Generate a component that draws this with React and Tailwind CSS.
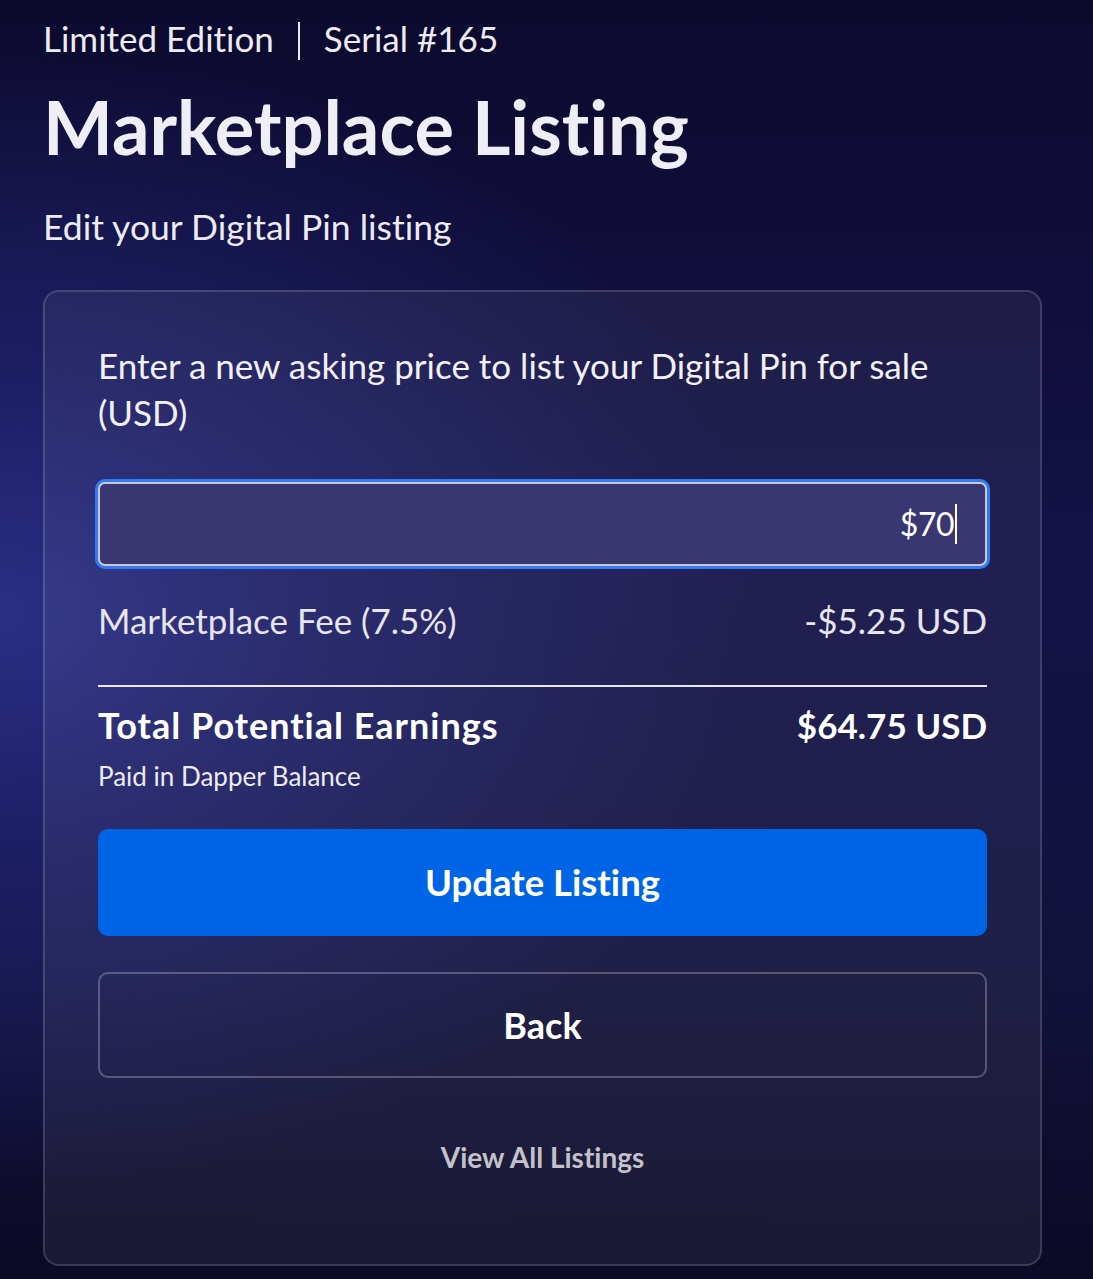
import React from 'react'

const FEE_RATE = 0.075;
const price = 70;

export default function App() {
  const fee = (price * FEE_RATE).toFixed(2);
  const total = (price - price * FEE_RATE).toFixed(2);

  return (
    <div className="min-h-[1279px] w-full bg-[#0c0a2c] bg-[radial-gradient(ellipse_70%_45%_at_0%_48%,#2a2f86_0%,#1d1f64_40%,transparent_100%),linear-gradient(180deg,#0d0a2e_0%,#141248_45%,#13123c_75%,#0c0a26_100%)] pl-[43px] pr-[51px] pt-[14px] pb-[13px] font-['Lato',sans-serif] text-white [font-variant-ligatures:none]">
      <div className="flex items-center text-[35px] leading-[48px] text-[#ecebf2]">
        <span>Limited Edition</span>
        <span className="mx-[24px] h-[38px] w-[2px] translate-y-[3px] bg-[#ecebf2]" />
        <span>Serial #165</span>
      </div>

      <h1 className="mt-[22px] text-[74px] font-bold leading-[86px] text-[#efeef4]">Marketplace Listing</h1>

      <p className="mt-[34px] text-[35.5px] leading-[46px] text-[#ecebf2]">Edit your Digital Pin listing</p>

      <div className="mt-[40px] rounded-[16px] border-2 border-white/15 bg-white/[0.06] px-[53px] pt-[50px] pb-[87px]">
        <p className="text-[35px] leading-[47px] text-[#f1f0f6]">
          Enter a new asking price to list your Digital Pin for sale (USD)
        </p>

        {/* price field, shown focused */}
        <div className="mt-[46px] flex h-[84px] items-center justify-end rounded-[7px] border-2 border-[#c9c8d2] bg-[#3a3672] px-[28px] ring-[3px] ring-[#2f7bf5]">
          <span className="text-[32px] leading-none tracking-[-0.5px] text-white">${price}</span>
          <span className="ml-[1px] h-[40px] w-[2px] bg-white" />
        </div>

        <div className="mt-[31px] flex items-center justify-between text-[35px] leading-[46px] text-[#e6e5ee]">
          <span>Marketplace Fee (7.5%)</span>
          <span>-${fee} USD</span>
        </div>

        <div className="mt-[42px] h-[2px] bg-[#e9e8f0]" />

        <div className="mt-[15px] flex items-center justify-between font-bold leading-[46px] text-white">
          <span className="text-[36px] tracking-[1px]">Total Potential Earnings</span>
          <span className="text-[35px]">${total} USD</span>
        </div>
        <p className="mt-[10px] text-[26px] leading-[36px] text-[#ecebf2]">Paid in Dapper Balance</p>

        <button className="mt-[35px] flex h-[107px] w-full items-center justify-center rounded-[10px] bg-[#0064e6] text-[36.5px] font-bold text-white">
          Update Listing
        </button>

        <button className="mt-[36px] flex h-[106px] w-full items-center justify-center rounded-[10px] border-2 border-white/25 text-[36px] font-bold text-white">
          Back
        </button>

        <div className="mt-[59px] text-center text-[28px] font-bold leading-[40px] text-[#c3c2cc]">View All Listings</div>
      </div>
    </div>
  )
}
